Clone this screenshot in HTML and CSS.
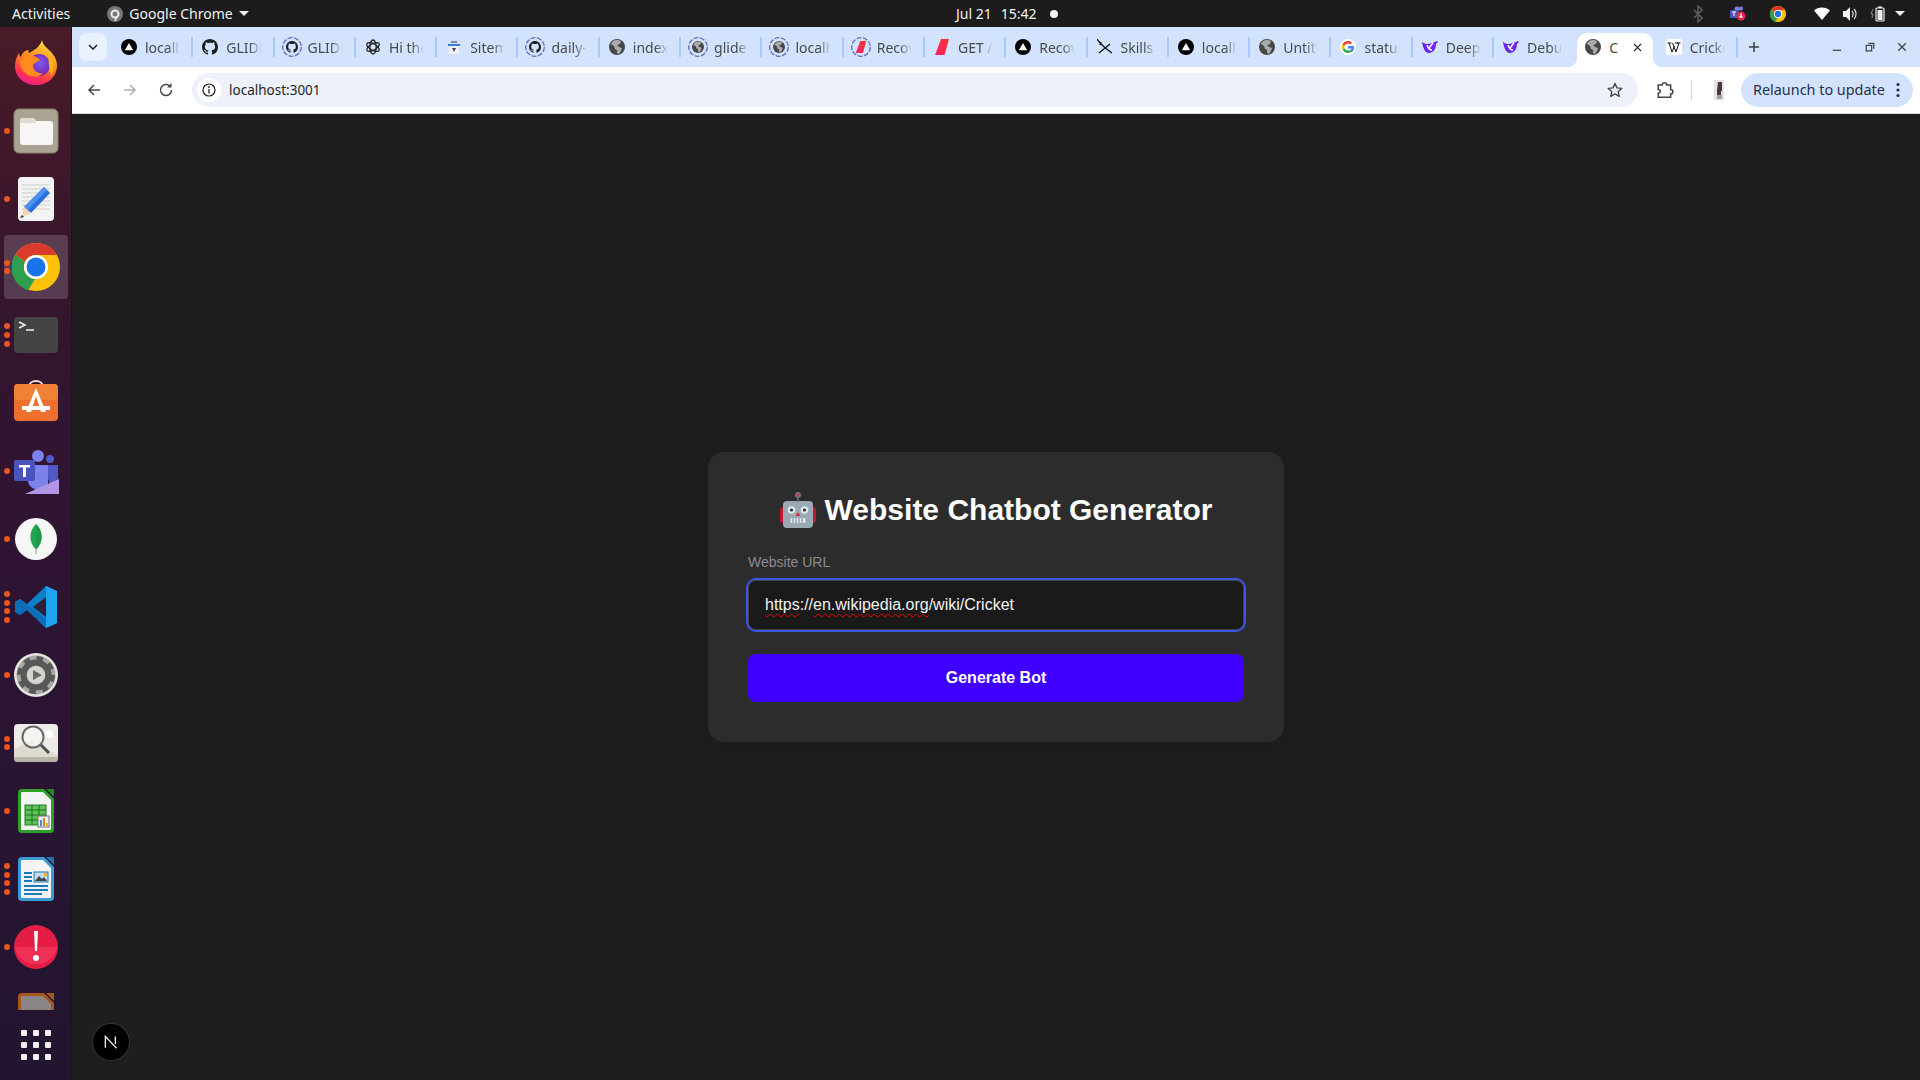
FILE: index.html
```html
<!DOCTYPE html>
<html lang="en">
<head>
<meta charset="utf-8">
<title>Website Chatbot Generator</title>
<link rel="stylesheet" href="styles.css">
</head>
<body>
<svg class="sprite" xmlns="http://www.w3.org/2000/svg">
  <symbol id="vercel" viewBox="0 0 16 16"><circle cx="8" cy="8" r="8" fill="#000"/><path d="M8 4l4.2 7.2H3.8z" fill="#fff"/></symbol>
  <symbol id="gh" viewBox="0 0 16 16"><path fill="#1b1f23" d="M8 0C3.58 0 0 3.58 0 8c0 3.54 2.29 6.53 5.47 7.59.4.07.55-.17.55-.38 0-.19-.01-.82-.01-1.49-2.01.37-2.53-.49-2.69-.94-.09-.23-.48-.94-.82-1.13-.28-.15-.68-.52-.01-.53.63-.01 1.08.58 1.23.82.72 1.21 1.87.87 2.33.66.07-.52.28-.87.51-1.07-1.78-.2-3.64-.89-3.64-3.95 0-.87.31-1.59.82-2.15-.08-.2-.36-1.02.08-2.12 0 0 .67-.21 2.2.82.64-.18 1.32-.27 2-.27.68 0 1.36.09 2 .27 1.53-1.04 2.2-.82 2.2-.82.44 1.1.16 1.92.08 2.12.51.56.82 1.27.82 2.15 0 3.07-1.87 3.75-3.65 3.95.29.25.54.73.54 1.48 0 1.07-.01 1.93-.01 2.2 0 .21.15.46.55.38A8.013 8.013 0 0016 8c0-4.42-3.58-8-8-8z"/></symbol>
  <symbol id="knot" viewBox="0 0 16 16"><g fill="none" stroke="#222" stroke-width="1.3"><ellipse cx="8" cy="8" rx="3.2" ry="7"/><ellipse cx="8" cy="8" rx="3.2" ry="7" transform="rotate(60 8 8)"/><ellipse cx="8" cy="8" rx="3.2" ry="7" transform="rotate(120 8 8)"/></g></symbol>
  <symbol id="sitemap" viewBox="0 0 16 16"><path d="M3 7h10v8H3z" fill="#eef1f6"/><path d="M5 2h6v2H5z" fill="#7d8ba5"/><path d="M2 5h12v2H2z" fill="#3f7ae0"/><path d="M6 9l2 4 2-4z" fill="#444"/></symbol>
  <symbol id="globe" viewBox="0 0 16 16"><circle cx="8" cy="8" r="8" fill="#474747"/><path d="M8 1c-3 0-5 1.600-6 4l3 2 1 3 2 1v3l2 1 2-3 1-3-3-1-2-2 3-1 1-3C10 1 9 1 8 1z" fill="#a9abae"/></symbol>
  <symbol id="cursor" viewBox="0 0 16 16"><defs><linearGradient id="cg" x1="0" y1="1" x2="1" y2="0"><stop offset="0" stop-color="#ff1f6b"/><stop offset="1" stop-color="#f5372f"/></linearGradient></defs><path d="M6 0h8L9.500 16H0z" fill="url(#cg)" transform="translate(1 0)"/></symbol>
  <symbol id="swords" viewBox="0 0 16 16"><path d="M0 0c2 3 5 7 15 14M13 5L2 14M4 3l-1 3" fill="none" stroke="#111" stroke-width="1.300"/></symbol>
  <symbol id="google" viewBox="0 0 16 16"><circle cx="8" cy="8" r="8" fill="#fff"/><path d="M14 8.300c0-.5 0-1-.1-1.300H8v2.500h3.400c-.1.800-.6 1.400-1.200 1.900l2 1.600c1.200-1.100 1.800-2.800 1.800-4.700z" fill="#4285f4"/><path d="M8 14c1.700 0 3.100-.6 4.200-1.400l-2-1.600c-.6.400-1.300.6-2.200.6-1.700 0-3-1.100-3.500-2.500L2.400 10.200C3.500 12.500 5.600 14 8 14z" fill="#34a853"/><path d="M4.500 9.100c-.2-.7-.2-1.500 0-2.200L2.400 5.300c-.9 1.700-.9 3.700 0 5.400z" fill="#fbbc05"/><path d="M8 4.400c1 0 1.800.3 2.400 1l1.800-1.800C11.100 2.600 9.700 2 8 2 5.600 2 3.500 3.400 2.400 5.300l2.100 1.600C5 5.500 6.300 4.400 8 4.400z" fill="#ea4335"/></symbol>
  <symbol id="deep" viewBox="0 0 16 16"><path d="M0 3c2 1 3 2 5 2 3 0 6-1 10-3l1 1-2 2c0 5-3 9-7 9C3 14 1 9 0 3z" fill="#6a27e8"/><path d="M5 6c1 3 3 5 5 5M11 4L7 9" stroke="#fff" stroke-width="1.500" fill="none"/></symbol>
  <symbol id="wiki" viewBox="0 0 16 16"><rect width="16" height="16" rx="2" fill="#fff"/><path d="M1.500 4h4M9 4h3M11 4h3.500M3 4l3 9 2.500-6M6.500 4l3.500 9 3-9" fill="none" stroke="#111" stroke-width="1"/></symbol>
</svg>

<header class="topbar">
  <div class="top-left">
    <span>Activities</span>
    <div class="app-menu">
      <svg class="top-icon" viewBox="0 0 16 16"><circle cx="8" cy="8" r="8" fill="#777"/><circle cx="8" cy="8" r="3.500" fill="none" stroke="#eee" stroke-width="2"/><path d="M10 11l-2 4" stroke="#eee" stroke-width="1.500"/></svg>
      <span>Google Chrome</span>
      <i class="caret"></i>
    </div>
  </div>
  <div class="clock">
    <span>Jul 21</span><span>15:42</span><i class="notify"></i>
  </div>
  <div class="tray">
    <svg class="tray-bt" viewBox="0 0 10 18"><path d="M1 5l8 8-4 4V1l4 4-8 8" fill="none" stroke="#5b5b5b" stroke-width="1.600"/></svg>
    <svg class="tray-icon" viewBox="0 0 16 16"><circle cx="11" cy="2.500" r="2" fill="#7b83eb"/><circle cx="7" cy="3" r="2.500" fill="#7b83eb"/><rect x="0" y="4" width="8" height="8" rx="1" fill="#4b53bc"/><path d="M2 6h4M4 6v4" stroke="#fff"/><circle cx="11" cy="10" r="4.500" fill="#e5264a"/><path d="M11 7.500v3.500M9.500 11h3" stroke="#fff" stroke-width="1.500"/></svg>
    <svg class="tray-chrome" viewBox="0 0 48 48"><use href="#chrome-big"/></svg>
    <svg class="tray-wifi" viewBox="0 0 16 14"><path d="M0 3.500C4 -.5 12 -.5 16 3.500L8 13z" fill="#fff"/></svg>
    <svg class="tray-vol" viewBox="0 0 16 16"><path d="M1 5h3l4-4v14l-4-4H1z" fill="#f2f2f2"/><path d="M10 5c1.500 1.500 1.500 4.500 0 6M12 3c2.700 2.500 2.700 7.500 0 10" fill="none" stroke="#ddd" stroke-width="1.200"/></svg>
    <svg class="tray-bat" viewBox="0 0 16 16"><path d="M3 3L1 8h2l-1 4" fill="none" stroke="#888" stroke-width="1"/><rect x="6" y="2" width="8" height="13" rx="1" fill="none" stroke="#eee" stroke-width="1.200"/><rect x="8" y="0.500" width="4" height="1.500" fill="#eee"/><rect x="7.500" y="4" width="5" height="10" fill="#eee"/></svg>
    <i class="caret tray-caret"></i>
  </div>
</header>

<div class="desktop">
  <nav class="dock">
    <ul class="dock-list">
      <li class="dock-item">
        <svg class="app" viewBox="0 0 48 48">
          <defs>
            <linearGradient id="ff" x1="0.700" y1="0" x2="0.300" y2="1"><stop offset="0" stop-color="#ffe03d"/><stop offset=".45" stop-color="#ff8a1f"/><stop offset=".8" stop-color="#ff2f55"/><stop offset="1" stop-color="#e81f8f"/></linearGradient>
            <radialGradient id="ffb" cx=".55" cy=".4" r=".6"><stop offset="0" stop-color="#7a5cf0"/><stop offset="1" stop-color="#7b1fa8"/></radialGradient>
          </defs>
          <path d="M30 1c1 5 4 7 8 11 5 5 7 10 7 14 0 12-9 20-21 20S3 38 3 27c0-6 2-10 4-13 0 2 1 3 2 4 1-4 4-7 8-7-1 1-1 2 0 3 4-2 11-6 13-13z" fill="url(#ff)"/>
          <circle cx="27" cy="26" r="11" fill="url(#ffb)"/>
          <path d="M8 22c4-5 9-7 14-5 4 2 6 3 6 4-3 2-6 3-7 5 0 5 4 9 10 8-3 3-8 5-13 3S8 30 8 22z" fill="#ff8a1f"/>
          <path d="M37 16c5 6 6 14 2 21-2-7-3-15-2-21z" fill="#ffb21f"/>
        </svg>
      </li>
      <li class="dock-item">
        <span class="dots"><i></i></span>
        <svg class="app" viewBox="0 0 48 48">
          <rect x="2" y="2" width="44" height="44" rx="5" fill="#a8a393" stroke="#85826f"/>
          <path d="M8 14c0-2 1-3 3-3h9c2 0 3 1 4 3h14c2 0 3 1 3 3v18c0 2-1 3-3 3H11c-2 0-3-1-3-3z" fill="#f7f6f4"/>
          <path d="M8 16c0-3 1-5 3-5h9c2 0 3 2 4 5z" fill="#dedbd2"/>
        </svg>
      </li>
      <li class="dock-item">
        <span class="dots"><i></i></span>
        <svg class="app" viewBox="0 0 48 48">
          <rect x="6" y="2" width="36" height="44" rx="4" fill="#f3f3f3"/>
          <path d="M10 10h28M10 14h28M10 18h28M10 22h28M10 26h28M10 30h28M10 34h28" stroke="#cfcfcf"/>
          <path d="M32 12l6 6-19 20-7-6z" fill="#2a6fe0"/>
          <path d="M32 12l3 3-19 20-4-3z" fill="#4e8ff0"/>
          <path d="M12 32l7 6-9 4z" fill="#f5d7b5"/>
          <path d="M10 40l-2 3 4-1z" fill="#333"/>
        </svg>
      </li>
      <li class="dock-item dock-active">
        <span class="dots"><i></i><i></i></span>
        <svg class="app" viewBox="0 0 48 48">
          <symbol id="chrome-big" viewBox="0 0 48 48">
            <circle cx="24" cy="24" r="24" fill="#ffc107"/>
            <path d="M24 0a24 24 0 0 1 20.800 12H24a12 12 0 0 0-11 7L3.500 11.500A24 24 0 0 1 24 0z" fill="#db3a2f"/>
            <path d="M3.500 11.500L13 19a12 12 0 0 0 10 17l-7 11.500A24 24 0 0 1 3.500 11.500z" fill="#2e9e4f"/>
            <circle cx="24" cy="24" r="12" fill="#fff"/><circle cx="24" cy="24" r="9.500" fill="#1a73e8"/>
          </symbol>
          <use href="#chrome-big"/>
        </svg>
      </li>
      <li class="dock-item">
        <span class="dots"><i></i><i></i><i></i></span>
        <svg class="app" viewBox="0 0 48 48">
          <rect x="2" y="6" width="44" height="36" rx="4" fill="#444"/>
          <path d="M7 11l6 3-6 3" fill="none" stroke="#eee" stroke-width="1.500"/>
          <path d="M14 19h8" stroke="#eee" stroke-width="1.500"/>
        </svg>
      </li>
      <li class="dock-item">
        <svg class="app" viewBox="0 0 48 48">
          <path d="M17 8c0-8 14-8 14 0" fill="none" stroke="#f0e2d0" stroke-width="2"/>
          <rect x="2" y="5" width="44" height="37" rx="4" fill="#ef6f2e"/>
          <rect x="2" y="5" width="44" height="16" rx="4" fill="#f28138"/>
          <path d="M24 9L14 33h5l5-16 5 16h5z" fill="#fff"/>
          <path d="M10 27h28v4H10z" fill="#fff"/>
        </svg>
      </li>
      <li class="dock-item">
        <span class="dots"><i></i></span>
        <svg class="app" viewBox="0 0 48 48">
          <circle cx="26" cy="9" r="6" fill="#7b83eb"/><circle cx="38" cy="12" r="4" fill="#5059c9"/>
          <path d="M32 18h14v14l-8 6z" fill="#5059c9"/>
          <path d="M16 18h20v18c0 5-4 7-9 7s-11-4-11-9z" fill="#7b83eb"/>
          <rect x="2" y="13" width="21" height="21" rx="2" fill="#4b53bc"/>
          <path d="M7 18h11v2.500h-4V30h-3v-9.500H7z" fill="#fff"/>
          <path d="M13 47l34-15v15z" fill="#b296e6"/>
        </svg>
      </li>
      <li class="dock-item">
        <span class="dots"><i></i></span>
        <svg class="app" viewBox="0 0 48 48">
          <circle cx="24" cy="24" r="21" fill="#f6f6f6"/>
          <path d="M24 9c7 7 8 17 0 26-8-9-7-19 0-26z" fill="#21a650"/>
          <path d="M24 9c7 7 8 17 0 26z" fill="#1d9a49"/>
          <path d="M24 33v6" stroke="#a8a8a0" stroke-width="1.200"/>
        </svg>
      </li>
      <li class="dock-item">
        <span class="dots"><i></i><i></i><i></i><i></i></span>
        <svg class="app" viewBox="0 0 48 48">
          <path d="M34 3l11 5v32l-11 5L15 27l-7 5-5-3v-10l5-3 7 5z" fill="#0d7fc9"/>
          <path d="M34 3l11 5v32l-11 5z" fill="#1fa3f0"/>
          <path d="M34 14v20l-13-10z" fill="#2c2136"/>
          <path d="M3 19l5-3 26 20v9l-19-18-7 5-5-3z" fill="#0a6fb8"/>
        </svg>
      </li>
      <li class="dock-item">
        <span class="dots"><i></i></span>
        <svg class="app" viewBox="0 0 48 48">
          <circle cx="24" cy="24" r="22" fill="#e4e4e0"/>
          <circle cx="24" cy="24" r="19.500" fill="#a8a8a4"/>
          <circle cx="24" cy="24" r="12.500" fill="none" stroke="#585858" stroke-width="6"/>
          <circle cx="24" cy="24" r="16.500" fill="none" stroke="#585858" stroke-width="5" stroke-dasharray="6.500 6.460"/>
          <circle cx="24" cy="24" r="9" fill="#d4d4d0"/>
          <path d="M21 19l9 5-9 5z" fill="#6a6a68"/>
        </svg>
      </li>
      <li class="dock-item">
        <span class="dots"><i></i><i></i></span>
        <svg class="app" viewBox="0 0 48 48">
          <rect x="2" y="5" width="44" height="38" rx="4" fill="#ecebe6"/>
          <path d="M2 38h44v1a4 4 0 0 1-4 4H6a4 4 0 0 1-4-4z" fill="#b9b5a6"/>
          <path d="M2 30l16-8 28 14v2H2z" fill="#dddbd1"/>
          <circle cx="37" cy="15" r="4" fill="#fff"/>
          <circle cx="21" cy="18" r="10.500" fill="#fafafa" fill-opacity=".6" stroke="#6a6a6a" stroke-width="2"/>
          <path d="M29 26l8 8" stroke="#4e4e4e" stroke-width="3"/>
        </svg>
      </li>
      <li class="dock-item">
        <span class="dots"><i></i></span>
        <svg class="app" viewBox="0 0 48 48">
          <path d="M10 2h22l10 10v30a4 4 0 0 1-4 4H10a4 4 0 0 1-4-4V6a4 4 0 0 1 4-4z" fill="#2ea02a"/>
          <path d="M10 5h21l8 8v29a1 1 0 0 1-1 1H10a1 1 0 0 1-1-1V6a1 1 0 0 1 1-1z" fill="#f3f3f3"/>
          <path d="M34 2h8v8z" fill="#1f8a1d"/>
          <rect x="13" y="18" width="21" height="20" fill="#5cc257" stroke="#2c7a28"/>
          <path d="M13 23h21M13 28h21M13 33h21M20 18v20M27 18v20" stroke="#1f6f1d"/>
          <rect x="26" y="29" width="11" height="11" fill="#eee" stroke="#777"/>
          <path d="M28 33h2v6h-2z" fill="#3a8fd8"/><path d="M31 31h2v8h-2z" fill="#e8782a"/><path d="M34 36h2v3h-2z" fill="#e8b32a"/>
        </svg>
      </li>
      <li class="dock-item">
        <span class="dots"><i></i><i></i><i></i><i></i></span>
        <svg class="app" viewBox="0 0 48 48">
          <path d="M10 2h22l10 10v30a4 4 0 0 1-4 4H10a4 4 0 0 1-4-4V6a4 4 0 0 1 4-4z" fill="#3a9bd6"/>
          <path d="M10 5h21l8 8v29a1 1 0 0 1-1 1H10a1 1 0 0 1-1-1V6a1 1 0 0 1 1-1z" fill="#f3f3f3"/>
          <path d="M34 2h8v8z" fill="#1f74ac"/>
          <path d="M12 18h8M12 22h8M12 26h8M12 31h24M12 35h24M12 39h18" stroke="#1a7ab8" stroke-width="2"/>
          <rect x="22" y="17" width="14" height="10" fill="#bfdcef" stroke="#1a7ab8"/>
          <path d="M23 26l4-5 3 3 2-2 3 4z" fill="#444"/><rect x="32" y="18" width="3" height="3" fill="#e8b32a"/>
        </svg>
      </li>
      <li class="dock-item">
        <span class="dots"><i></i></span>
        <svg class="app" viewBox="0 0 48 48">
          <circle cx="24" cy="24" r="22" fill="#e51c44"/>
          <path d="M2.500 24h43A22 22 0 0 1 2.500 24z" fill="#ee2f56"/>
          <path d="M22 8h4l-1 20h-2z" fill="#fff"/>
          <circle cx="24" cy="35" r="3" fill="#fff"/>
        </svg>
      </li>
      <li class="dock-item">
        <svg class="app" viewBox="0 0 48 48">
          <path d="M10 2h22l10 10v30a4 4 0 0 1-4 4H10a4 4 0 0 1-4-4V6a4 4 0 0 1 4-4z" fill="#a8571f"/>
          <path d="M10 5h21l8 8v29a1 1 0 0 1-1 1H10a1 1 0 0 1-1-1V6a1 1 0 0 1 1-1z" fill="#8a8688"/>
          <path d="M34 2h8v8z" fill="#a8571f"/>
        </svg>
      </li>
    </ul>
    <button class="apps-grid" type="button" aria-label="Show Applications">
      <i></i><i></i><i></i><i></i><i></i><i></i><i></i><i></i><i></i>
    </button>
  </nav>

  <div class="browser">
    <div class="tabstrip">
      <button class="tab-search" type="button" aria-label="Search tabs">
        <svg viewBox="0 0 10 6"><path d="M1 1l4 4 4-4" fill="none" stroke="#1f1f1f" stroke-width="1.500"/></svg>
      </button>
      <div class="tabs">
        <div class="tab"><svg class="fav"><use href="#vercel"/></svg><span class="tab-title">localhost:3000</span></div>
        <div class="tab"><svg class="fav"><use href="#gh"/></svg><span class="tab-title">GLIDE-Coop</span></div>
        <div class="tab"><svg class="fav" viewBox="0 0 16 16"><circle class="ring" cx="8" cy="8" r="9.300"/><use href="#gh" x="2" y="2" width="12" height="12"/></svg><span class="tab-title">GLIDE-Coop</span></div>
        <div class="tab"><svg class="fav"><use href="#knot"/></svg><span class="tab-title">Hi there</span></div>
        <div class="tab"><svg class="fav"><use href="#sitemap"/></svg><span class="tab-title">Sitemap</span></div>
        <div class="tab"><svg class="fav" viewBox="0 0 16 16"><circle class="ring" cx="8" cy="8" r="9.300"/><use href="#gh" x="2" y="2" width="12" height="12"/></svg><span class="tab-title">daily-code</span></div>
        <div class="tab"><svg class="fav"><use href="#globe"/></svg><span class="tab-title">index.html</span></div>
        <div class="tab"><svg class="fav" viewBox="0 0 16 16"><circle class="ring" cx="8" cy="8" r="9.300"/><use href="#globe" x="2" y="2" width="12" height="12"/></svg><span class="tab-title">glide-coop</span></div>
        <div class="tab"><svg class="fav" viewBox="0 0 16 16"><circle class="ring" cx="8" cy="8" r="9.300"/><use href="#globe" x="2" y="2" width="12" height="12"/></svg><span class="tab-title">localhost</span></div>
        <div class="tab"><svg class="fav" viewBox="0 0 16 16"><circle class="ring" cx="8" cy="8" r="9.300"/><use href="#cursor" x="2" y="2" width="12" height="12"/></svg><span class="tab-title">Recover</span></div>
        <div class="tab"><svg class="fav"><use href="#cursor"/></svg><span class="tab-title">GET /api</span></div>
        <div class="tab"><svg class="fav"><use href="#vercel"/></svg><span class="tab-title">Recover</span></div>
        <div class="tab"><svg class="fav"><use href="#swords"/></svg><span class="tab-title">Skills</span></div>
        <div class="tab"><svg class="fav"><use href="#vercel"/></svg><span class="tab-title">localhost</span></div>
        <div class="tab"><svg class="fav"><use href="#globe"/></svg><span class="tab-title">Untitled</span></div>
        <div class="tab"><svg class="fav"><use href="#google"/></svg><span class="tab-title">status</span></div>
        <div class="tab"><svg class="fav"><use href="#deep"/></svg><span class="tab-title">DeepSeek</span></div>
        <div class="tab tab-plain"><svg class="fav"><use href="#deep"/></svg><span class="tab-title">Debug</span></div>
        <div class="tab tab-active"><svg class="fav"><use href="#globe"/></svg><span class="tab-title">Create</span>
          <svg class="tab-close" viewBox="0 0 10 10"><path d="M1 1l8 8M9 1l-8 8" stroke="#1f1f1f" stroke-width="1.400"/></svg></div>
        <div class="tab"><svg class="fav"><use href="#wiki"/></svg><span class="tab-title">Cricket</span></div>
      </div>
      <svg class="new-tab" viewBox="0 0 12 12"><path d="M6 1v10M1 6h10" stroke="#3c3c3c" stroke-width="1.500"/></svg>
      <div class="win-controls">
        <svg viewBox="0 0 12 12"><path d="M1 10h10" stroke="#444" stroke-width="1.500"/></svg>
        <svg viewBox="0 0 12 12"><path d="M4 1.500h6.500V8M1.500 4h6.500v6.500H1.500z" fill="none" stroke="#444" stroke-width="1.500"/></svg>
        <svg viewBox="0 0 12 12"><path d="M1.500 1.500l9 9M10.500 1.500l-9 9" stroke="#444" stroke-width="1.500"/></svg>
      </div>
    </div>

    <div class="toolbar">
      <svg class="tool" viewBox="0 0 16 16"><path d="M14 8H3M8 3L3 8l5 5" fill="none" stroke="#474747" stroke-width="1.500"/></svg>
      <svg class="tool" viewBox="0 0 16 16"><path d="M2 8h11M8 3l5 5-5 5" fill="none" stroke="#b0b0b0" stroke-width="1.500"/></svg>
      <svg class="tool" viewBox="0 0 16 16"><path d="M13.500 8A5.500 5.500 0 1 1 12 4.200" fill="none" stroke="#474747" stroke-width="1.500"/><path d="M13.500 1v4.500H9z" fill="#474747"/></svg>
      <div class="omnibox">
        <span class="site-info">
          <svg viewBox="0 0 14 14"><circle cx="7" cy="7" r="6" fill="none" stroke="#1f1f1f" stroke-width="1.200"/><path d="M7 6v4.500" stroke="#1f1f1f" stroke-width="1.300"/><circle cx="7" cy="4" r=".9" fill="#1f1f1f"/></svg>
        </span>
        <span class="url">localhost:3001</span>
        <svg class="star" viewBox="0 0 16 16"><path d="M8 1.500l2 4.400 4.800.5-3.600 3.200 1 4.700L8 11.900l-4.200 2.400 1-4.700L1.200 6.400 6 5.900z" fill="none" stroke="#474747" stroke-width="1.400" stroke-linejoin="round"/></svg>
      </div>
      <svg class="ext" viewBox="0 0 16 16"><path d="M2 3.500h3.500a2 2 0 0 1 4 0H13v4a2 2 0 0 1 0 4v3H2v-3.500a1.700 1.700 0 0 0 0-3.500z" fill="none" stroke="#474747" stroke-width="1.400"/></svg>
      <i class="tool-sep"></i>
      <svg class="avatar" viewBox="0 0 10 20"><rect width="10" height="20" fill="#e4e4e4"/><path d="M4 2h4v9H7v4H3v-5z" fill="#4a3636"/><path d="M3 15h5v4H3z" fill="#a0a0a0"/></svg>
      <div class="relaunch">
        <span>Relaunch to update</span>
        <svg viewBox="0 0 4 16"><circle cx="2" cy="2.500" r="1.600" fill="#1f2f4f"/><circle cx="2" cy="8" r="1.600" fill="#1f2f4f"/><circle cx="2" cy="13.500" r="1.600" fill="#1f2f4f"/></svg>
      </div>
    </div>

    <main class="page">
      <section class="card">
        <h1 class="card-title">
          <svg class="robot" viewBox="0 0 36 36">
            <path d="M0 18a3 3 0 0 1 3-3h30a3 3 0 0 1 3 3v10a3 3 0 0 1-3 3H3a3 3 0 0 1-3-3z" fill="#be1931"/>
            <rect x="3" y="9" width="30" height="27" rx="4" fill="#99aab5"/>
            <path d="M17.200 2h1.600v8h-1.600z" fill="#66757f"/>
            <circle cx="18" cy="3" r="3" fill="#66757f"/><circle cx="18" cy="3" r="1.500" fill="#dd2e44"/>
            <circle cx="11.500" cy="18" r="3.800" fill="#e1e8ed"/><circle cx="11.500" cy="18" r="1.600" fill="#292f33"/>
            <circle cx="24.500" cy="18" r="3.800" fill="#e1e8ed"/><circle cx="24.500" cy="18" r="1.600" fill="#292f33"/>
            <path d="M18 20l2.500 4h-5z" fill="#dd2e44"/>
            <rect x="10.500" y="26" width="15" height="5" rx="1" fill="#e1e8ed"/>
            <path d="M13 26v5M16 26v5M19 26v5M22 26v5" stroke="#66757f" stroke-width=".9"/>
          </svg>
          <span>Website Chatbot Generator</span>
        </h1>
        <label class="field-label">Website URL</label>
        <div class="field-input"><span class="misspelled">https</span>://<span class="misspelled">en.wikipedia.org</span>/wiki/Cricket</div>
        <button class="submit" type="button">Generate Bot</button>
      </section>
      <div class="next-badge">
        <svg viewBox="0 0 16 16"><path d="M3.500 12.500V3.500L12.500 13M11.500 3.500v6" fill="none" stroke="#eee" stroke-width="1.100"/></svg>
      </div>
    </main>
  </div>
</div>
</body>
</html>
```

FILE: styles.css
```css
* { box-sizing: border-box; }
html, body { height: 100%; }
body {
  margin: 0;
  height: 1080px;
  overflow: hidden;
  display: flex;
  flex-direction: column;
  background: #1e1e1e;
  font-family: "Liberation Sans", Arial, sans-serif;
}
.sprite { width: 0; height: 0; position: absolute; }
ul { margin: 0; padding: 0; list-style: none; }

/* GNOME top bar */
.topbar {
  flex: 0 0 27px;
  display: grid;
  grid-template-columns: 956px auto 1fr;
  align-items: center;
  background: #1c1c1c;
  color: #f2f2f2;
  font-family: "Noto Sans", sans-serif;
  font-size: 14px;
}
.top-left { display: flex; align-items: center; padding-left: 12px; gap: 37px; }
.app-menu { display: flex; align-items: center; gap: 6px; }
.top-icon { width: 16px; height: 16px; }
.caret {
  width: 0; height: 0;
  border-left: 5px solid transparent;
  border-right: 5px solid transparent;
  border-top: 5px solid #eee;
}
.clock { display: flex; align-items: center; gap: 9px; }
.notify { width: 8px; height: 8px; border-radius: 50%; background: #f5f5f5; margin-left: 4px; }
.tray { display: flex; align-items: center; justify-content: flex-end; padding-right: 15px; }
.tray-bt { width: 10px; height: 18px; margin-right: 27px; }
.tray-icon { width: 16px; height: 16px; margin-right: 24px; }
.tray-chrome { width: 16px; height: 16px; margin-right: 28px; }
.tray-wifi { width: 16px; height: 14px; margin-right: 12px; }
.tray-vol { width: 16px; height: 16px; margin-right: 12px; }
.tray-bat { width: 16px; height: 16px; margin-right: 9px; }

.desktop { flex: 1; display: flex; min-height: 0; }

/* Ubuntu dock */
.dock {
  flex: 0 0 71px;
  display: flex;
  flex-direction: column;
  background: linear-gradient(180deg, #4a1b27 0%, #35152e 25%, #2d1433 55%, #221530 100%);
  border-right: 1px solid #1a1420;
}
.dock-list { height: 983px; overflow: hidden; padding-top: 2px; }
.dock-item {
  position: relative;
  height: 68px;
  width: 71px;
  display: flex;
  align-items: center;
  justify-content: center;
  padding-left: 1px;
}
.app { width: 48px; height: 48px; display: block; }
.dock-active::before {
  content: "";
  position: absolute;
  left: 4px; top: 2px;
  width: 64px; height: 64px;
  border-radius: 4px;
  background: rgba(255, 255, 255, .17);
}
.dock-active .app { position: relative; }
.dots {
  position: absolute;
  left: 4px; top: 0; bottom: 0;
  display: flex;
  flex-direction: column;
  justify-content: center;
  gap: 2.700px;
  z-index: 1;
}
.dots i { width: 6px; height: 6px; border-radius: 50%; background: #e95420; }
.apps-grid {
  flex: 1;
  width: 70px;
  display: grid;
  grid-template-columns: repeat(3, 6px);
  grid-auto-rows: 6px;
  gap: 6px;
  justify-content: center;
  align-content: center;
  background: none;
  border: 0;
  padding: 0 0 0 2px;
}
.apps-grid i { background: #eee; border-radius: 1px; }

/* Chrome */
.browser { flex: 1; display: flex; flex-direction: column; min-width: 0; }
.tabstrip {
  flex: 0 0 40px;
  display: flex;
  align-items: flex-start;
  padding: 6px 0 0 7px;
  background: #d3e3fd;
  font-family: "Noto Sans", sans-serif;
}
.tab-search {
  width: 28px; height: 28px;
  margin-right: 4px;
  border: 0;
  border-radius: 8px;
  background: #e9f1fe;
  display: flex;
  align-items: center;
  justify-content: center;
  padding: 0;
}
.tab-search svg { width: 10px; height: 6px; }
.tabs { position: relative; z-index: 0; display: flex; height: 34px; }
.tab {
  position: relative;
  flex: 0 0 81.300px;
  width: 81.300px;
  height: 34px;
  display: flex;
  align-items: center;
  padding: 0 12px 6px 10px;
  gap: 8px;
  font-size: 14px;
  color: #46494d;
}
.tab::after {
  content: "";
  position: absolute;
  right: -1px; top: 4px;
  width: 2px; height: 20px;
  background: #a8c7fa;
}
.tab-plain::after, .tab-active::after { display: none; }
.fav { flex: 0 0 16px; width: 16px; height: 16px; overflow: visible; }
.ring { fill: none; stroke: #5f6fc4; stroke-width: 1.300; stroke-dasharray: 5 1.500; }
.tab-title {
  flex: 1;
  min-width: 0;
  overflow: hidden;
  white-space: nowrap;
  -webkit-mask-image: linear-gradient(90deg, #000 65%, transparent 100%);
  mask-image: linear-gradient(90deg, #000 65%, transparent 100%);
}
.tab-active {
  background: #fff;
  margin: 0 3px;
  flex-basis: 75.300px;
  width: 75.300px;
  padding-left: 8px;
  padding-right: 11px;
  border-radius: 10px 10px 0 0;
}
.tab-active .tab-title { -webkit-mask-image: none; mask-image: none; }
.tab-active::before {
  content: "";
  position: absolute;
  left: -10px; right: -10px; bottom: 0;
  height: 10px;
  z-index: -1;
  background:
    radial-gradient(circle at 0 0, transparent 10px, #fff 10.500px) left bottom / 10px 10px no-repeat,
    radial-gradient(circle at 100% 0, transparent 10px, #fff 10.500px) right bottom / 10px 10px no-repeat;
}
.tab-close { flex: 0 0 9px; width: 9px; height: 9px; margin-left: 6px; }
.new-tab { width: 12px; height: 12px; margin: 8px 0 0 11px; }
.win-controls { margin-left: auto; display: flex; gap: 22.500px; padding: 8px 13px 0 0; }
.win-controls svg { width: 10px; height: 12px; }

.toolbar {
  flex: 0 0 47px;
  display: flex;
  align-items: center;
  padding: 0 7px 1px 14px;
  background: #fff;
  border-bottom: 1px solid #d8d8d8;
  font-family: "Noto Sans", sans-serif;
}
.tool { width: 16px; height: 16px; margin-right: 20px; }
.tool:nth-of-type(3) { margin-right: 18px; }
.omnibox {
  flex: 1;
  height: 34px;
  display: flex;
  align-items: center;
  padding: 0 15px 0 5px;
  border-radius: 17px;
  background: #edf2fa;
}
.site-info {
  width: 24px; height: 24px;
  border-radius: 50%;
  background: #fff;
  display: flex;
  align-items: center;
  justify-content: center;
}
.site-info svg { width: 14px; height: 14px; }
.url { margin-left: 8px; flex: 1; font-size: 13.500px; color: #1f1f1f; }
.star { width: 16px; height: 16px; }
.ext { width: 18px; height: 18px; margin-left: 18px; }
.tool-sep { width: 1px; height: 20px; background: #c7d7f0; margin: 0 22px 0 17px; }
.avatar { width: 10px; height: 20px; margin-right: 17px; }
.relaunch {
  height: 34px;
  width: 172px;
  display: flex;
  align-items: center;
  justify-content: space-between;
  padding: 0 13px 0 12px;
  border-radius: 17px;
  background: #d3e3fd;
  color: #1f2f4f;
  font-size: 14.400px;
}
.relaunch svg { width: 4px; height: 16px; }

/* Page content */
.page {
  position: relative;
  flex: 1;
  display: flex;
  align-items: center;
  justify-content: center;
  background: #1e1e1e;
}
.card {
  width: 576px;
  height: 290px;
  padding: 40px;
  border-radius: 16px;
  background: #2c2c2c;
  box-shadow: 0 4px 20px rgba(0, 0, 0, .15);
  display: flex;
  flex-direction: column;
}
.card-title {
  margin: 0 0 26px;
  height: 36px;
  display: flex;
  align-items: center;
  justify-content: center;
  gap: 9px;
  color: #fff;
  font-size: 30px;
  font-weight: 700;
}
.robot { width: 36px; height: 36px; }
.field-label {
  display: block;
  font-size: 14px;
  line-height: 16px;
  margin-bottom: 10px;
  color: #8b8b92;
}
.field-input {
  height: 50px;
  padding: 0 16px;
  display: flex;
  align-items: center;
  white-space: pre;
  border-radius: 8px;
  background: #1a1a1a;
  border: 1px solid #444;
  outline: 2px solid #3b55e6;
  outline-offset: 0;
  color: #f2f2f2;
  font-size: 16px;
}
.misspelled { text-decoration: underline wavy #f00000 1.200px; text-underline-offset: 3px; }
.submit {
  margin-top: 24px;
  height: 48px;
  border: 0;
  border-radius: 8px;
  background: #4000ff;
  color: #fff;
  font-family: inherit;
  font-size: 16px;
  font-weight: 700;
}
.next-badge {
  position: absolute;
  left: 21px;
  bottom: 20px;
  width: 36px; height: 36px;
  border-radius: 50%;
  background: #000;
  box-shadow: 0 0 0 1px #333;
  display: flex;
  align-items: center;
  justify-content: center;
}
.next-badge svg { width: 20px; height: 20px; }
```
